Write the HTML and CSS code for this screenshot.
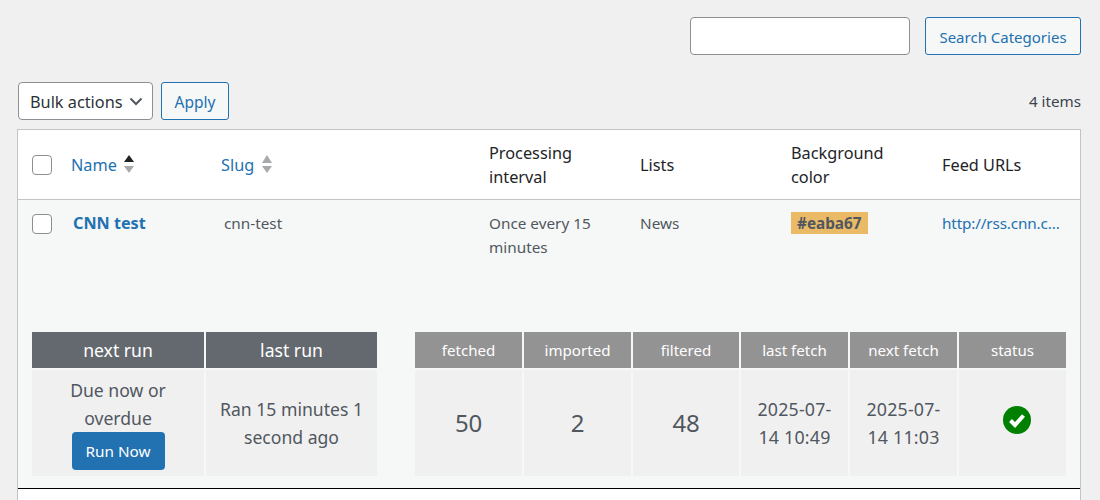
FILE: index.html
```html
<!DOCTYPE html>
<html lang="en">
<head>
<meta charset="utf-8">
<title>Categories</title>
<link rel="stylesheet" href="styles.css">
</head>
<body>
<div class="search-row">
  <input class="search-input" type="text" aria-label="Search">
  <button class="btn btn-search">Search Categories</button>
</div>
<div class="nav-row">
  <div class="bulk">
    <div class="select">Bulk actions
      <svg class="chev" width="14" height="9" viewBox="0 0 14 9"><path d="M1.5 1.5 7 7l5.5-5.5" fill="none" stroke="#50575e" stroke-width="2"/></svg>
    </div>
    <button class="btn btn-apply">Apply</button>
  </div>
  <div class="count">4 items</div>
</div>
<div class="list">
  <div class="cols head">
    <div class="c-check"><span class="box"></span></div>
    <div class="c-name"><a class="sort">Name <svg class="arrows" width="10" height="18" viewBox="0 0 10 18"><path d="M5 0 10 7H0z" fill="#1d2327"/><path d="M5 18 0 11h10z" fill="#a7aaad"/></svg></a></div>
    <div><a class="sort sort-slug">Slug <svg class="arrows" width="10" height="18" viewBox="0 0 10 18"><path d="M5 0 10 8H0z" fill="#a7aaad"/><path d="M5 18 0 11h10z" fill="#a7aaad"/></svg></a></div>
    <div>Processing interval</div>
    <div>Lists</div>
    <div>Background color</div>
    <div>Feed URLs</div>
  </div>
  <div class="row">
    <div class="cols cells">
      <div class="c-check"><span class="box"></span></div>
      <div class="c-name"><a class="title">CNN test</a></div>
      <div class="slug">cnn-test</div>
      <div>Once every 15 minutes</div>
      <div>News</div>
      <div><span class="swatch">#eaba67</span></div>
      <div><a class="url">http://rss.cnn.c...</a></div>
    </div>
    <div class="details">
      <div class="stat stat-run">
        <div class="th">next run</div>
        <div class="th">last run</div>
        <div class="td"><span>Due now or overdue</span><button class="run">Run Now</button></div>
        <div class="td">Ran 15 minutes 1 second ago</div>
      </div>
      <div class="stat stat-feed">
        <div class="th">fetched</div>
        <div class="th">imported</div>
        <div class="th">filtered</div>
        <div class="th">last fetch</div>
        <div class="th">next fetch</div>
        <div class="th">status</div>
        <div class="td big">50</div>
        <div class="td big">2</div>
        <div class="td big">48</div>
        <div class="td date">2025-07-14 10:49</div>
        <div class="td date">2025-07-14 11:03</div>
        <div class="td"><svg class="ok" width="28" height="28" viewBox="0 0 28 28"><circle cx="14" cy="14" r="14" fill="#008000"/><path d="M7.5 14.5 12 19l8.5-9.5" fill="none" stroke="#fff" stroke-width="4"/></svg></div>
      </div>
    </div>
  </div>
</div>
</body>
</html>
```
FILE: styles.css
```css
* { box-sizing: border-box; }
html, body { margin: 0; height: 500px; overflow: hidden; }
body {
  background: #f0f0f1;
  color: #3c434a;
  font-family: "Noto Sans", "Open Sans", sans-serif;
  font-size: 15px;
  padding: 17px 19px 0 18px;
}
.search-row { display: flex; justify-content: flex-end; gap: 15px; height: 38px; }
.search-input {
  width: 220px; height: 38px; background: #fff;
  border: 1px solid #8c8f94; border-radius: 4px;
}
.btn {
  font: inherit; font-size: 15px;
  height: 38px; padding: 1px 0 0; background: #f6f7f7; color: #2271b1;
  border: 1px solid #2271b1; border-radius: 3px;
}
.btn-search { width: 156px; }
.nav-row { display: flex; justify-content: space-between; align-items: center; height: 38px; margin-top: 27px; }
.bulk { display: flex; gap: 8px; }
.select {
  display: flex; align-items: center; justify-content: space-between;
  width: 135px; height: 38px; padding: 1px 9px 0 11px; background: #fff; color: #2c3338;
  border: 1px solid #8c8f94; border-radius: 4px; font-size: 16.3px;
}
.btn-apply { width: 68px; font-size: 15.5px; }
.count { font-size: 15.2px; }
.list {
  margin: 9px 0 0 -1px; background: #fff; height: 371px;
  border: 1px solid #c3c4c7; border-bottom: 0;
}
.cols { display: grid; grid-template-columns: 43px 150px 268px 151px 151px 151px 148px; }
.cols > div { padding-left: 10px; padding-right: 10px; }
.cols > .c-check { padding: 0 0 0 14px; }
.cols > .c-name { padding-left: 10px; }
.head {
  height: 70px; align-items: center; color: #1d2327; font-size: 16.3px; line-height: 24px;
  border-bottom: 1px solid #c3c4c7;
}
.head .c-check, .cells .c-check { display: flex; }
.box {
  display: block; width: 20px; height: 20px; background: #fff;
  border: 1px solid #8c8f94; border-radius: 4px;
}
.sort { display: flex; align-items: center; gap: 7px; color: #2271b1; }
.sort-slug { gap: 8px; }
.arrows { display: block; margin-top: -2px; }
.row { background: #f6f7f7; height: 289px; border-bottom: 1px solid #000; }
.cells { padding-top: 11px; height: 132px; font-size: 15.3px; line-height: 24px; color: #50575e; }
.cells > .c-check { padding-top: 3px; }
.title { display: block; padding-left: 2px; font-size: 16.2px; font-weight: 700; color: #2271b1; }
.slug { padding-left: 13px !important; }
.url { color: #2271b1; white-space: nowrap; letter-spacing: -0.15px; }
.swatch {
  display: inline-block; height: 22px; line-height: 22px; padding: 0 6px; background: #eaba67;
  font-weight: 700; color: #50575e;
}
.details { display: flex; gap: 38px; padding-left: 14px; text-align: center; }
.stat { display: grid; grid-template-rows: 36px 106px; gap: 2px; }
.stat-run { grid-template-columns: 172px 171px; }
.stat-feed { grid-template-columns: 107px 107px 106px 107px 107px 107px; }
.th { display: flex; align-items: center; justify-content: center; color: #fff; }
.stat-run .th { background: #646970; font-size: 17.6px; }
.stat-feed .th { background: #939393; font-size: 15.1px; }
.td {
  display: flex; flex-direction: column; align-items: center; justify-content: center;
  background: #f0f0f1; color: #50575e; font-size: 17.6px; line-height: 28px;
  padding: 0 12px;
}
.stat-feed .td { padding: 0 20px; }
.stat-feed .date { font-size: 17.8px; letter-spacing: 0.2px; padding: 0 15px; }
.big { font-size: 24px; letter-spacing: -0.3px; }
.run {
  font: inherit; font-size: 15.3px; width: 93px; height: 38px; margin-bottom: 0;
  background: #2271b1; color: #fff; border: 0; border-radius: 4px;
}
.ok { display: block; margin: 0 0 6px 9px; }
```
